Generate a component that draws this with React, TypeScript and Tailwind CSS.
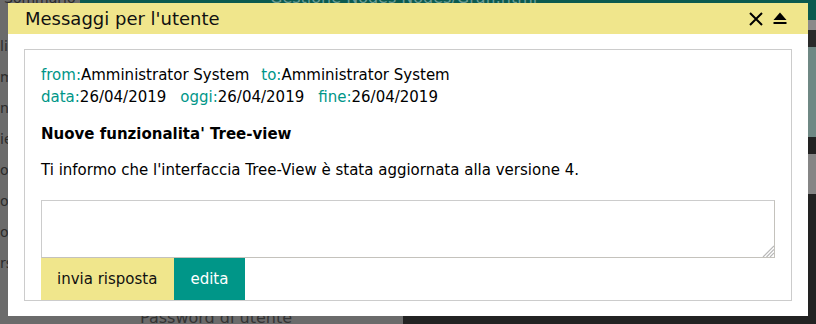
import React from "react";

const F = { fontFamily: '"DejaVu Sans", Verdana, sans-serif' };

function Background() {
  return (
    <div className="absolute inset-0 flex flex-col bg-[#1f1f1f]" style={F}>
      <div className="flex h-[20px] shrink-0">
        <div className="w-[80px] bg-[#6b6b6b] text-[14px] leading-[20px] text-[#2a2a2a] pl-1 -mt-[12px]">Sommario</div>
        <div className="flex-1 bg-[#0b5a4f] text-[16px] leading-[20px] text-[#6a9b94] pl-[190px] -mt-[12px]">Gestione Nodes Nodes/Grafi.html</div>
      </div>
      <div className="flex flex-1">
        <div className="w-[403px] bg-[#6b6b6b] flex flex-col text-[14px] text-[#2b2b2b]">
          <div className="pt-[16px] flex flex-col gap-[10px]">
            <span>lic</span>
            <span>m</span>
            <span>nc</span>
            <span>ie</span>
            <span>or</span>
            <span>ol</span>
            <span>o</span>
            <span>rs</span>
          </div>
          <div className="mt-auto flex items-end h-[24px] text-[16px] leading-[16px] text-[#333]">
            <span className="ml-[140px] -mb-[2px]">Password di utente</span>
          </div>
        </div>
        <div className="flex-1 flex flex-col">
          <div className="h-[10px] bg-[#8a8a8a]" />
          <div className="h-[17px] bg-[#2a2a2a]" />
          <div className="h-[90px] bg-[#6f8884]" />
          <div className="h-[17px] bg-[#222]" />
          <div className="h-[40px] bg-[#858585]" />
          <div className="flex-1 bg-[#222]" />
        </div>
      </div>
    </div>
  );
}

function Label({ children }: { children: React.ReactNode }) {
  return <span className="text-[#009688]">{children}</span>;
}

export default function App() {
  return (
    <div className="relative w-[816px] h-[324px] overflow-hidden" style={F}>
      <Background />
      <div className="absolute left-[8px] top-[3px] w-[800px] h-[313px] bg-white flex flex-col">
        <div className="h-[31px] shrink-0 bg-[#f0e68c] flex items-center pl-[17px] pr-[21px]">
          <span className="text-[18px] leading-[22px] text-[#111] flex-1">Messaggi per l'utente</span>
          <svg width="14" height="14" viewBox="0 0 14 14" className="mr-[10px]">
            <path d="M1 1 L13 13 M13 1 L1 13" stroke="#000" strokeWidth="2" />
          </svg>
          <svg width="14" height="14" viewBox="0 0 14 14">
            <path d="M7 0.5 L13.5 8 L0.5 8 Z" fill="#000" />
            <rect x="0.5" y="10" width="13" height="2" fill="#000" />
          </svg>
        </div>
        <div className="flex-1 px-[16px] py-[15px] flex">
          <div className="flex-1 border border-[#cccccc] flex flex-col px-[16px] pt-[14px] text-[15px] leading-[22px] text-[#000]">
            <div>
              <Label>from:</Label>Amministrator System<span className="ml-[12px]"><Label>to:</Label>Amministrator System</span>
            </div>
            <div>
              <Label>data:</Label>26/04/2019<span className="ml-[14px]"><Label>oggi:</Label>26/04/2019</span>
              <span className="ml-[14px]"><Label>fine:</Label>26/04/2019</span>
            </div>
            <div className="mt-[15px] font-bold">Nuove funzionalita' Tree-view</div>
            <div className="mt-[14px]">Ti informo che l'interfaccia Tree-View è stata aggiornata alla versione 4.</div>
            <div className="relative mt-[19px]">
              <textarea className="h-[58px] w-full border border-[#cccccc] border-r-[#c4c2bc] border-b-[#c4c2bc] bg-white resize-none outline-none block" />
              <svg width="12" height="12" viewBox="0 0 12 12" className="absolute right-[1px] bottom-[1px]">
                <path d="M12 1 L1 12 M12 4.5 L4.5 12 M12 8 L8 12" stroke="#b8b8b8" strokeWidth="1.2" />
              </svg>
            </div>
            <div className="flex">
              <button className="h-[42px] pl-[16px] pr-[17px] bg-[#f0e68c] text-[#111] text-[15px]">invia risposta</button>
              <button className="h-[42px] pl-[16px] pr-[17px] bg-[#009688] text-white text-[15px]">edita</button>
            </div>
          </div>
        </div>
      </div>
    </div>
  );
}
